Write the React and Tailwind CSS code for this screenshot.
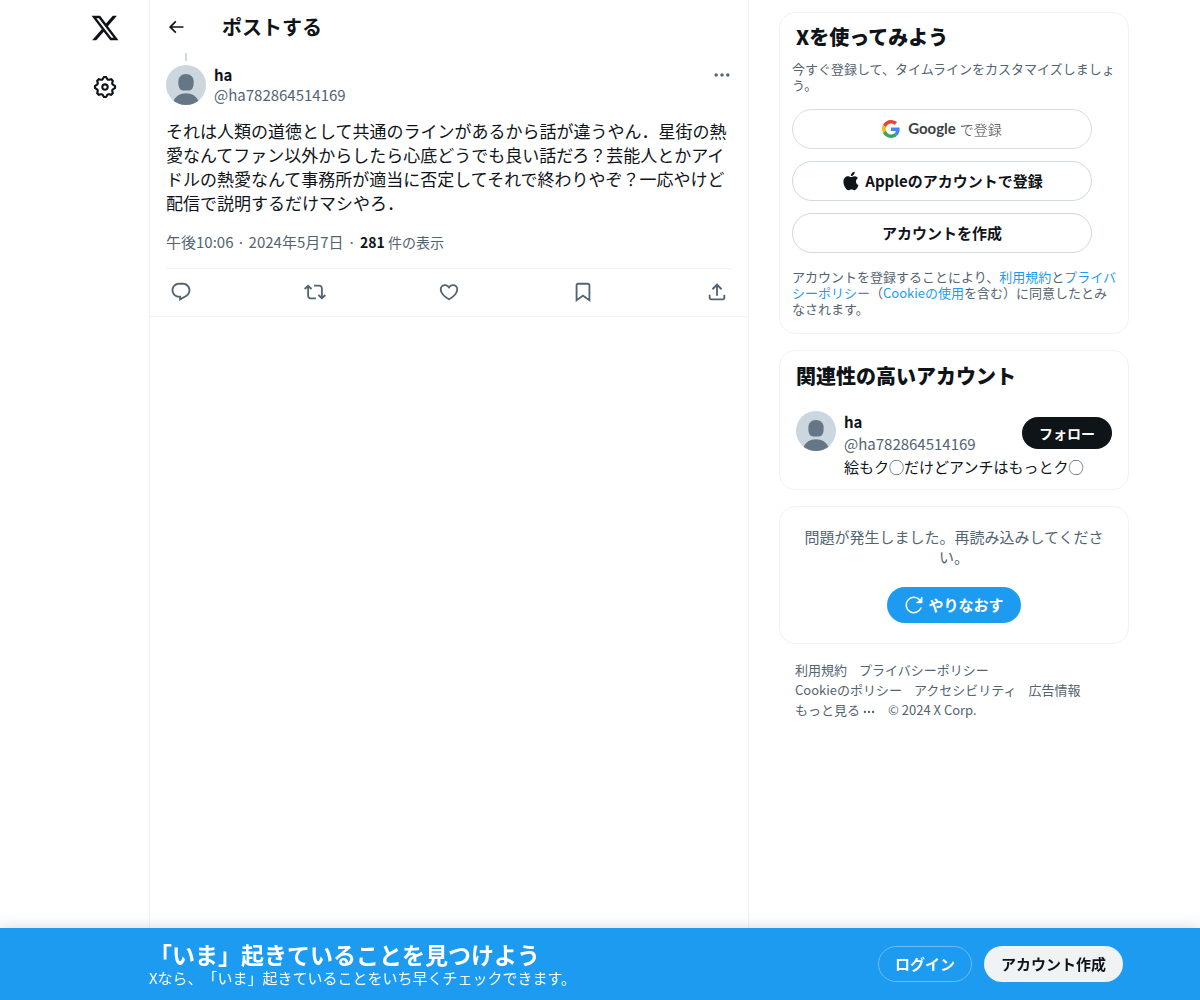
import React from "react";

const paths = {
  x: "M18.244 2.25h3.308l-7.227 8.26 8.502 11.24H16.17l-5.214-6.817L4.99 21.75H1.68l7.73-8.835L1.254 2.25H8.08l4.713 6.231zm-1.161 17.52h1.833L7.084 4.126H5.117z",
  settings:
    "M10.54 1.75h2.92l1.57 2.36c.11.17.32.25.53.21l2.53-.59 2.17 2.17-.58 2.54c-.05.2.04.41.21.53l2.36 1.57v2.92l-2.36 1.57c-.17.12-.26.33-.21.53l.58 2.54-2.17 2.17-2.53-.59c-.21-.04-.42.04-.53.21l-1.57 2.36h-2.92l-1.58-2.36c-.11-.17-.32-.25-.52-.21l-2.54.59-2.17-2.17.58-2.54c.05-.2-.03-.41-.21-.53l-2.35-1.57v-2.92L4.1 8.97c.18-.12.26-.33.21-.53L3.73 5.9 5.9 3.73l2.54.59c.2.04.41-.04.52-.21l1.58-2.36zm1.07 2l-.98 1.47C10.05 6.08 9 6.5 7.99 6.27l-1.46-.34-.6.6.33 1.46c.24 1.01-.18 2.07-1.05 2.64l-1.46.98v.78l1.46.98c.87.57 1.29 1.63 1.05 2.64l-.33 1.46.6.6 1.46-.34c1.01-.23 2.06.19 2.64 1.05l.98 1.47h.78l.97-1.47c.58-.86 1.63-1.28 2.65-1.05l1.45.34.61-.6-.34-1.46c-.23-1.01.18-2.07 1.05-2.64l1.47-.98v-.78l-1.47-.98c-.87-.57-1.28-1.63-1.05-2.64l.34-1.46-.61-.6-1.45.34c-1.02.23-2.07-.19-2.65-1.05l-.97-1.47h-.78zM12 10.5c-.83 0-1.5.67-1.5 1.5s.67 1.5 1.5 1.5c.82 0 1.5-.67 1.5-1.5s-.68-1.5-1.5-1.5zM8.5 12c0-1.93 1.56-3.5 3.5-3.5 1.93 0 3.5 1.57 3.5 3.5s-1.57 3.5-3.5 3.5c-1.94 0-3.5-1.57-3.5-3.5z",
  back: "M7.414 13l5.043 5.04-1.414 1.42L3.586 12l7.457-7.46 1.414 1.42L7.414 11H21v2H7.414z",
  more: "M3 12c0-1.1.9-2 2-2s2 .9 2 2-.9 2-2 2-2-.9-2-2zm9 2c1.1 0 2-.9 2-2s-.9-2-2-2-2 .9-2 2 .9 2 2 2zm7 0c1.1 0 2-.9 2-2s-.9-2-2-2-2 .9-2 2 .9 2 2 2z",
  reply:
    "M1.751 10c0-4.42 3.584-8 8.005-8h4.366c4.49 0 8.129 3.64 8.129 8.13 0 2.96-1.607 5.68-4.196 7.11l-8.054 4.46v-3.69h-.067c-4.49.1-8.183-3.51-8.183-8.01zm8.005-6c-3.317 0-6.005 2.69-6.005 6 0 3.37 2.77 6.08 6.138 6.01l.351-.01h1.761v2.3l5.087-2.81c1.951-1.08 3.163-3.13 3.163-5.36 0-3.39-2.744-6.13-6.129-6.13H9.756z",
  repost:
    "M4.5 3.88l4.432 4.14-1.364 1.46L5.5 7.55V16c0 1.1.896 2 2 2H13v2H7.5c-2.209 0-4-1.79-4-4V7.55L1.432 9.48.068 8.02 4.5 3.88zM16.5 6H11V4h5.5c2.209 0 4 1.79 4 4v8.45l2.068-1.93 1.364 1.46-4.432 4.14-4.432-4.14 1.364-1.46 2.068 1.93V8c0-1.1-.896-2-2-2z",
  like: "M16.697 5.5c-1.222-.06-2.679.51-3.89 2.16l-.805 1.09-.806-1.09C9.984 6.01 8.526 5.44 7.304 5.5c-1.243.07-2.349.78-2.91 1.91-.552 1.12-.633 2.78.479 4.82 1.074 1.97 3.257 4.27 7.129 6.61 3.87-2.34 6.052-4.64 7.126-6.61 1.111-2.04 1.03-3.7.477-4.82-.561-1.13-1.666-1.84-2.908-1.91zm4.187 7.69c-1.351 2.48-4.001 5.12-8.379 7.67l-.503.3-.504-.3c-4.379-2.55-7.029-5.19-8.382-7.67-1.36-2.5-1.41-4.86-.514-6.67.887-1.79 2.647-2.91 4.601-3.01 1.651-.09 3.368.56 4.798 2.01 1.429-1.45 3.146-2.1 4.796-2.01 1.954.1 3.714 1.22 4.601 3.01.896 1.81.846 4.17-.514 6.67z",
  bookmark:
    "M4 4.5C4 3.12 5.119 2 6.5 2h11C18.881 2 20 3.12 20 4.5v18.44l-8-5.71-8 5.71V4.5zM6.5 4c-.276 0-.5.22-.5.5v14.56l6-4.29 6 4.29V4.5c0-.28-.224-.5-.5-.5h-11z",
  share:
    "M12 2.59l5.7 5.7-1.41 1.42L13 6.41V16h-2V6.41l-3.3 3.3-1.41-1.42L12 2.59zM21 15l-.02 3.51c0 1.38-1.12 2.49-2.5 2.49H5.5C4.11 21 3 19.88 3 18.5V15h2v3.5c0 .28.22.5.5.5h12.98c.28 0 .5-.22.5-.5L19 15h2z",
  apple:
    "M16.365 1.43c0 1.14-.493 2.27-1.177 3.08-.744.9-1.99 1.57-2.987 1.57-.12 0-.23-.02-.3-.03-.01-.06-.04-.22-.04-.39 0-1.15.572-2.27 1.206-2.98.804-.94 2.142-1.64 3.248-1.68.03.13.05.28.05.43zm4.565 15.71c-.03.07-.463 1.58-1.518 3.12-.945 1.34-1.94 2.71-3.43 2.71-1.517 0-1.9-.88-3.63-.88-1.698 0-2.302.91-3.67.91-1.377 0-2.332-1.26-3.428-2.8-1.287-1.82-2.323-4.63-2.323-7.28 0-4.28 2.797-6.55 5.552-6.55 1.448 0 2.675.95 3.6.95.865 0 2.222-1.01 3.902-1.01.613 0 2.886.06 4.374 2.19-.13.09-2.383 1.37-2.383 4.19 0 3.26 2.854 4.42 2.955 4.45z",
};

const actions = [
  { icon: "reply", label: "返信" },
  { icon: "repost", label: "リポスト" },
  { icon: "like", label: "いいね" },
  { icon: "bookmark", label: "ブックマーク" },
  { icon: "share", label: "共有" },
];

const Icon = ({ name, className }) => (
  <svg viewBox="0 0 24 24" fill="currentColor" className={className} aria-hidden="true">
    <path d={paths[name]} />
  </svg>
);

const GoogleLogo = () => (
  <svg viewBox="0 0 48 48" className="size-[18px]" aria-hidden="true">
    <path fill="#EA4335" d="M24 9.5c3.54 0 6.71 1.22 9.21 3.6l6.85-6.85C35.9 2.38 30.47 0 24 0 14.62 0 6.51 5.38 2.56 13.22l7.98 6.19C12.43 13.72 17.74 9.5 24 9.5z" />
    <path fill="#4285F4" d="M46.98 24.55c0-1.57-.15-3.09-.38-4.55H24v9.02h12.94c-.58 2.96-2.26 5.48-4.78 7.18l7.73 6c4.51-4.18 7.09-10.36 7.09-17.65z" />
    <path fill="#FBBC05" d="M10.53 28.59c-.48-1.45-.76-2.99-.76-4.59s.27-3.14.76-4.59l-7.98-6.19C.92 16.46 0 20.12 0 24c0 3.88.92 7.54 2.56 10.78l7.97-6.19z" />
    <path fill="#34A853" d="M24 48c6.48 0 11.93-2.13 15.89-5.81l-7.73-6c-2.15 1.45-4.92 2.3-8.16 2.3-6.26 0-11.57-4.22-13.47-9.91l-7.98 6.19C6.51 42.62 14.62 48 24 48z" />
  </svg>
);

const RetryIcon = () => (
  <svg viewBox="0 0 20 20" fill="none" stroke="currentColor" strokeWidth="1.5" className="size-5" aria-hidden="true">
    <path d="M17 13A7.7 7.700 0 1 1 15.600 4.800" strokeLinecap="round" />
    <path d="M17.700 2.600V7.400H12.900" strokeLinecap="round" strokeLinejoin="round" />
    <path d="M17.700 2.600V7.400H12.900z" fill="currentColor" stroke="none" />
  </svg>
);

const Avatar = () => (
  <svg viewBox="0 0 40 40" className="size-10 shrink-0 rounded-full" role="img" aria-label="ha">
    <rect width="40" height="40" fill="#cbd6de" />
    <path fill="#657786" d="M20 9c4.700 0 7.700 3.200 7.700 8 0 6-1.700 8.600-5.700 8.600h-4c-4 0-5.700-2.600-5.700-8.600 0-4.800 3-8 7.700-8z" />
    <path fill="#657786" d="M20 28.200c6 0 10.400 3 12.400 7.600V40H7.600v-4.200c2-4.600 6.400-7.600 12.400-7.600z" />
  </svg>
);

const Card = ({ className, children }) => (
  <section className={`rounded-2xl border border-[#eff3f4] ${className}`}>{children}</section>
);

const Link = ({ children }) => (
  <a href="#" className="text-[#1d9bf0] hover:underline">
    {children}
  </a>
);

const SignupButton = ({ children }) => (
  <button className="flex h-10 w-full cursor-pointer items-center justify-center rounded-full border border-[#cfd9de] text-[15px] font-bold">
    {children}
  </button>
);

const Nav = () => (
  <header className="flex w-[88px] shrink-0 flex-col items-center">
    <a href="#" aria-label="X" className="flex h-14 items-center">
      <Icon name="x" className="size-[30px]" />
    </a>
    <a href="#" aria-label="設定" className="flex h-[62px] items-center">
      <Icon name="settings" className="size-[26px]" />
    </a>
  </header>
);

const Post = () => (
  <main className="min-h-screen w-[600px] border-x border-[#eff3f4]">
    <div className="flex h-[53px] items-center gap-9 px-4">
      <button aria-label="戻る" className="cursor-pointer">
        <Icon name="back" className="size-5" />
      </button>
      <h2 className="text-xl font-bold">ポストする</h2>
    </div>
    <article className="border-b border-[#eff3f4] px-4">
      <div className="flex w-10 justify-center pb-1">
        <div className="h-2 w-0.5 bg-[#cfd9de]" />
      </div>
      <div className="flex gap-2">
        <Avatar />
        <div className="flex-1 text-[15px] leading-5">
          <div className="font-bold">ha</div>
          <div className="text-[#536471]">@ha782864514169</div>
        </div>
        <button aria-label="もっと見る" className="h-5 cursor-pointer text-[#536471]">
          <Icon name="more" className="size-5" />
        </button>
      </div>
      <p className="mt-[14px] text-[17px] leading-6">
        それは人類の道徳として共通のラインがあるから話が違うやん．星街の熱愛なんてファン以外からしたら心底どうでも良い話だろ？芸能人とかアイドルの熱愛なんて事務所が適当に否定してそれで終わりやぞ？一応やけど配信で説明するだけマシやろ．
      </p>
      <div className="flex gap-1 pt-[17px] pb-4 text-[15px] leading-5 text-[#536471]">
        <time>午後10:06 · 2024年5月7日</time>
        <span>·</span>
        <span className="text-sm leading-5">
          <b className="text-[#0f1419]">281</b> 件の表示
        </span>
      </div>
      <div className="flex h-12 items-center justify-between border-t border-[#eff3f4] px-1 pb-px text-[#536471]">
        {actions.map((a) => (
          <button key={a.icon} aria-label={a.label} className="cursor-pointer">
            <Icon name={a.icon} className="size-[22px]" />
          </button>
        ))}
      </div>
    </article>
  </main>
);

const Sidebar = () => (
  <aside className="mr-[10px] ml-[30px] flex w-[350px] flex-col gap-4 pt-3 pb-24">
    <Card className="px-3 pt-3 pb-4 text-[13px] leading-4 text-[#536471]">
      <h2 className="px-1 text-xl leading-6 font-extrabold text-[#0f1419]">Xを使ってみよう</h2>
      <p className="mt-3">今すぐ登録して、タイムラインをカスタマイズしましょう。</p>
      <div className="my-4 flex w-[300px] flex-col gap-3 text-[#0f1419]">
        <button className="flex h-10 w-full cursor-pointer items-center justify-center gap-2 rounded-full border border-[#dadce0] text-[#3c4043]">
          <GoogleLogo />
          <span className="flex items-center gap-1 text-sm font-light">
            <span className="font-[Lato] text-[15px] font-bold">Google</span> で登録
          </span>
        </button>
        <SignupButton>
          <Icon name="apple" className="mr-1 size-5" />
          Appleのアカウントで登録
        </SignupButton>
        <SignupButton>アカウントを作成</SignupButton>
      </div>
      <p>
        アカウントを登録することにより、<Link>利用規約</Link>と<Link>プライバシーポリシー</Link>（<Link>Cookieの使用</Link>を含む）に同意したとみなされます。
      </p>
    </Card>

    <Card className="px-4 pt-[13px] pb-3">
      <h2 className="text-xl leading-6 font-extrabold">関連性の高いアカウント</h2>
      <div className="mt-[23px] flex gap-2 text-[15px]">
        <Avatar />
        <div className="min-w-0 flex-1">
          <div className="flex items-center justify-between">
            <div className="leading-[22px]">
              <div className="font-bold">ha</div>
              <div className="text-[#536471]">@ha782864514169</div>
            </div>
            <button className="h-8 cursor-pointer rounded-full bg-[#0f1419] px-[17px] text-sm font-bold text-white">
              フォロー
            </button>
          </div>
          <p className="mt-0.5 leading-5">絵もク◯だけどアンチはもっとク◯</p>
        </div>
      </div>
    </Card>

    <Card className="flex flex-col items-center px-5 py-5 text-[15px] leading-5">
      <p className="px-1 text-center text-[#536471]">問題が発生しました。再読み込みしてください。</p>
      <button className="mt-5 flex h-9 cursor-pointer items-center gap-1 rounded-full bg-[#1d9bf0] px-[17px] font-bold text-white">
        <RetryIcon />
        やりなおす
      </button>
    </Card>

    <nav className="flex flex-wrap gap-x-3 px-4 text-[13px] leading-5 text-[#536471]">
      <a href="#">利用規約</a>
      <a href="#" className="mr-12">プライバシーポリシー</a>
      <a href="#">Cookieのポリシー</a>
      <a href="#">アクセシビリティ</a>
      <a href="#">広告情報</a>
      <button className="flex cursor-pointer items-center gap-0.5">
        もっと見る
        <Icon name="more" className="mt-1 size-[14px]" />
      </button>
      <span>© 2024 X Corp.</span>
    </nav>
  </aside>
);

const LoginBar = () => (
  <div className="fixed inset-x-0 bottom-0 flex h-[72px] justify-center bg-[#1d9bf0] text-white shadow-[0_0_15px_rgba(101,119,134,0.3)]">
    <div className="flex w-[1078px] items-center justify-between pr-4 pl-[88px]">
      <div>
        <div className="text-[23px] leading-7 font-bold">「いま」起きていることを見つけよう</div>
        <div className="text-[15px] leading-5">Xなら、「いま」起きていることをいち早くチェックできます。</div>
      </div>
      <div className="flex gap-3 text-[15px] font-bold">
        <a href="#" className="flex h-9 items-center rounded-full border border-[#6cbdf5] px-4">
          ログイン
        </a>
        <a href="#" className="flex h-9 items-center rounded-full bg-[#eff3f4] px-[17px] text-[#0f1419]">
          アカウント作成
        </a>
      </div>
    </div>
  </div>
);

const App = () => {
  return (
    <div
      lang="ja"
      className="min-h-screen bg-white font-['Noto_Sans_CJK_JP',sans-serif] text-[#0f1419] [text-spacing-trim:space-all]"
    >
      <div className="flex justify-center">
        <Nav />
        <Post />
        <Sidebar />
      </div>
      <LoginBar />
    </div>
  );
};

export default App;
